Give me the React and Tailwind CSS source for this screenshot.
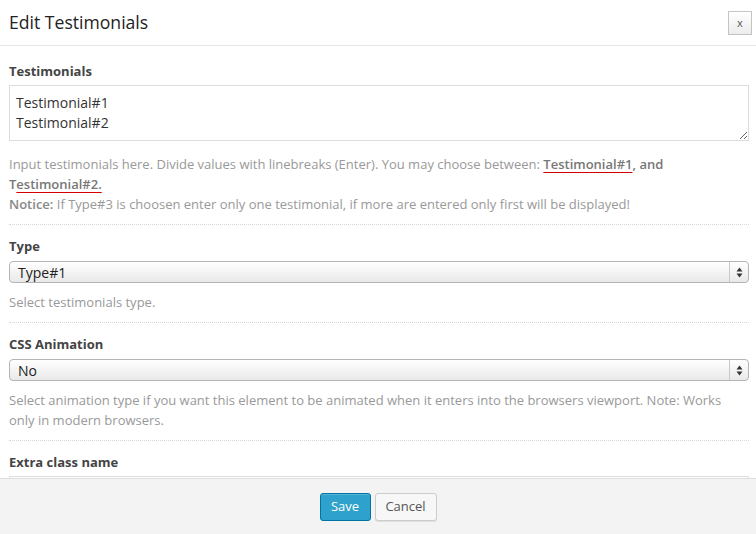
const font = { fontFamily: '"Open Sans", "Noto Sans", sans-serif' };

const Separator = () => <div className="border-t border-dotted border-[#d8d8d8]" />;

const Label = ({ children }) => (
  <div className="text-[13px] font-bold leading-[18px] text-[#444]">{children}</div>
);

const Help = ({ children, className = '' }) => (
  <div className={`text-[13px] leading-[20px] text-[#999] ${className}`}>{children}</div>
);

const Select = ({ value }) => (
  <div className="mt-[6px] flex h-[22px] items-stretch rounded-[4px] border border-[#b4b4b4] bg-gradient-to-b from-white to-[#e9e9e9] shadow-[inset_0_1px_0_#fff]">
    <div className="flex flex-1 items-center pl-[8px] text-[14px] text-[#222]">{value}</div>
    <div className="flex w-[19px] items-center justify-center border-l border-[#c8c8c8]">
      <svg width="7" height="11" viewBox="0 0 7 11">
        <path d="M3.5 0.5 L6.5 4.5 H0.5 Z" fill="#333" />
        <path d="M3.5 10.5 L6.5 6.5 H0.5 Z" fill="#333" />
      </svg>
    </div>
  </div>
);

const App = () => (
  <div className="flex h-[534px] w-[756px] flex-col overflow-hidden bg-white" style={font}>
    {/* header */}
    <div className="flex h-[46px] shrink-0 items-center justify-between border-b border-[#e5e5e5] pl-[9px] pr-[4px]">
      <h1 className="text-[17.6px] font-normal text-[#222]">Edit Testimonials</h1>
      <button className="flex h-[24px] w-[24px] items-center justify-center border border-[#c4c4c4] bg-gradient-to-b from-white to-[#ececec] text-[11px] leading-none text-[#555]">
        x
      </button>
    </div>

    {/* body */}
    <div className="flex-1 overflow-hidden pl-[9px] pr-[7px] pt-[16px]">
      <Label>Testimonials</Label>
      <textarea
        readOnly
        defaultValue={'Testimonial#1\nTestimonial#2'}
        className="mt-[5px] block h-[56px] w-full border border-[#dddddd] px-[6px] py-[7px] text-[14px] leading-[20px] text-[#333] outline-none"
        style={font}
      />
      <Help className="mt-[13px] pb-[10px]">
        Input testimonials here. Divide values with linebreaks (Enter). You may choose between:{' '}
        <span className="font-semibold text-[#777]">
          <span className="underline decoration-[#d40000] decoration-1 underline-offset-[3px]">Testimonial#1</span>, and T
          <span className="underline decoration-[#d40000] decoration-1 underline-offset-[3px]">estimonial#2.</span>
        </span>
        <br />
        <span className="font-semibold text-[#888]">Notice:</span> If Type#3 is choosen enter only one testimonial, if more are entered only first will be displayed!
      </Help>
      <Separator />

      <div className="pt-[12px]">
        <Label>Type</Label>
        <Select value="Type#1" />
        <Help className="mt-[9px] pb-[10px]">Select testimonials type.</Help>
      </div>
      <Separator />

      <div className="pt-[12px]">
        <Label>CSS Animation</Label>
        <Select value="No" />
        <Help className="mt-[9px] pb-[10px]">
          Select animation type if you want this element to be animated when it enters into the browsers viewport. Note: Works only in modern browsers.
        </Help>
      </div>
      <Separator />

      <div className="pt-[12px]">
        <Label>Extra class name</Label>
        <div className="mt-[5px] h-[28px] border border-[#dddddd]" />
      </div>
    </div>

    {/* footer */}
    <div className="flex h-[56px] shrink-0 justify-center gap-[4px] border-t border-[#dddddd] bg-[#f3f3f3] pt-[14px]">
      <button className="h-[28px] w-[51px] rounded-[3px] border border-[#0074a2] bg-[#2ea2cc] text-[13px] text-white shadow-[inset_0_1px_0_rgba(120,200,230,0.5)]">
        Save
      </button>
      <button className="h-[28px] w-[62px] rounded-[3px] border border-[#cccccc] bg-[#f7f7f7] text-[13px] text-[#555] shadow-[0_1px_0_rgba(0,0,0,0.08)]">
        Cancel
      </button>
    </div>
  </div>
);

export default App;
